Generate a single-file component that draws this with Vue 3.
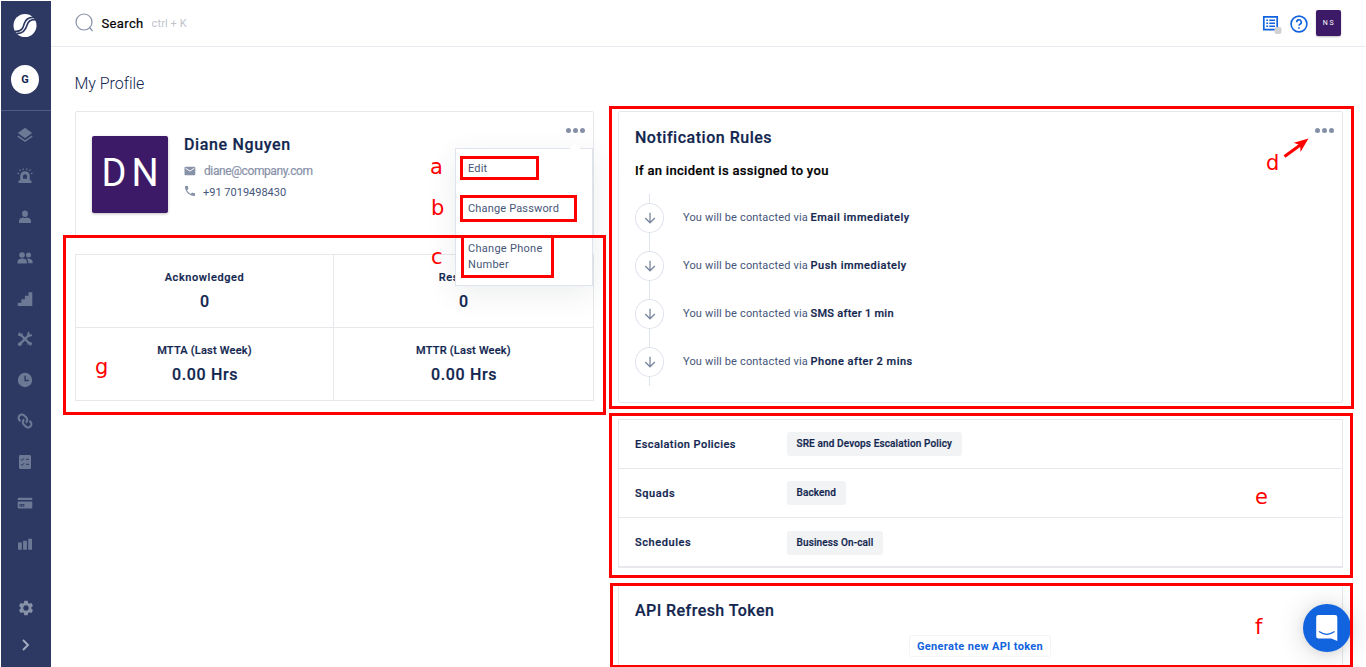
<script setup>
const nav = ['layers', 'siren', 'person', 'people', 'stairs', 'tools', 'clock', 'link', 'checklist', 'card', 'bars']

const stats = [
  { label: 'Acknowledged', value: '0', cls: 'wide' },
  { label: 'Resolved', value: '0', cls: 'wide' },
  { label: 'MTTA (Last Week)', value: '0.00 Hrs', cls: '' },
  { label: 'MTTR (Last Week)', value: '0.00 Hrs', cls: '' },
]

const rules = ['Email immediately', 'Push immediately', 'SMS after 1 min', 'Phone after 2 mins']

const groups = [
  { name: 'Escalation Policies', tag: 'SRE and Devops Escalation Policy' },
  { name: 'Squads', tag: 'Backend' },
  { name: 'Schedules', tag: 'Business On-call' },
]

const notes = ['a', 'b', 'c', 'd', 'e', 'f', 'g']
</script>

<template>
  <div class="app">
    <aside class="sidebar">
      <svg class="logo" viewBox="0 0 24 24">
        <circle cx="12" cy="11.5" r="11.5" fill="#fff" />
        <path d="M22.500 3.600C15.500 2.600 12.700 5 11.300 9.600C10 14.400 8.500 17.800 2 17.300" fill="none" stroke="#2d3963" stroke-width="1.700" />
        <path d="M23.500 5.800C18 4.800 15.400 6.600 14 11.200C12.600 15.800 10.300 19.900 3.500 19.400" fill="none" stroke="#2d3963" stroke-width="1.700" />
      </svg>
      <div class="org">G</div>
      <nav class="nav">
        <svg v-for="n in nav" :key="n" viewBox="0 0 16 16">
          <template v-if="n === 'layers'">
            <path d="M8 .8L15.200 6 8 11.200.8 6z" />
            <path d="M.8 9.200L8 14.200l7.200-5" fill="none" stroke="currentColor" stroke-width="1.500" />
          </template>
          <template v-else-if="n === 'siren'">
            <path fill-rule="evenodd" d="M3.200 12.500V8a4.800 4.800 0 0 1 9.600 0v4.500h1.700V15H1.500v-2.500zM8 6.300a2 2 0 0 0-2 2v2.400h4V8.300a2 2 0 0 0-2-2z" />
            <path d="M.5 4.900l1.600.8M2.400 1.500l1.300 1.400M5.900.4l.5 1.700M10.100.4l-.5 1.700M13.600 1.500l-1.300 1.400M15.500 4.900l-1.600.8" fill="none" stroke="currentColor" stroke-width="1.100" />
          </template>
          <template v-else-if="n === 'person'">
            <ellipse cx="8" cy="4.800" rx="2.900" ry="3.300" />
            <path d="M2 14v-1.600Q2 9 6 8.600q2 1 4 0q4 .4 4 3.800V14z" />
          </template>
          <template v-else-if="n === 'people'">
            <circle cx="5" cy="5" r="2.800" />
            <circle cx="11.500" cy="5" r="2.500" />
            <path d="M.5 13.500v-1.800Q1 8.600 5.200 8.600t4.700 3.100v1.800zM9.800 8.600q5.400-.1 5.800 3v1.700h-4.500q.3-2.800-1.300-4.700z" />
          </template>
          <path v-else-if="n === 'stairs'" d="M.8 15v-3.200h3.500V8.200h3.600V4.700h3.600V1.200h3.800V15z" />
          <template v-else-if="n === 'tools'">
            <path d="M3 3l10.300 10.300M13 3L2.800 13.200" fill="none" stroke="currentColor" stroke-width="2.400" />
            <path d="M.8 4.400L2 .9l1.700 2.200 2-1L5 5.700zM15.300 11.800l-1.400 3.500-1.500-2.200-2 .7.900-3.300zM10.800 1L10 4.500l1.500 1.400 3.600-1-.2-1.700-2 .6-1-1 .7-2z" />
            <circle cx="2.800" cy="13.200" r="1.900" />
          </template>
          <path v-else-if="n === 'clock'" fill-rule="evenodd" d="M8 .8a7.200 7.200 0 1 0 0 14.400A7.200 7.200 0 0 0 8 .8zM7.400 3.800h1.400v4h3v1.400H7.400z" />
          <g v-else-if="n === 'link'" fill="none" stroke="currentColor" stroke-width="2.100" transform="rotate(45 8 8)">
            <path d="M5 11.300H3.600a3.300 3.300 0 0 1 0-6.600h2.900a3.300 3.300 0 0 1 3.200 4" />
            <path d="M11 4.700h1.400a3.300 3.300 0 0 1 0 6.600H9.500a3.300 3.300 0 0 1-3.200-4" />
          </g>
          <template v-else-if="n === 'checklist'">
            <rect x="2" y="1" width="12" height="14" rx="1.200" />
            <path d="M4 5.300l1.100 1.100 2-2.200M9 5.300h3M4 10.300l1.100 1.100 2-2.200M9 10.300h3" fill="none" stroke="#2d3963" stroke-width="1" />
          </template>
          <template v-else-if="n === 'card'">
            <path fill-rule="evenodd" d="M1.700 2.800h12.600q1 0 1 1V5H.7V3.800q0-1 1-1zM.7 6.500h14.600v6q0 1-1 1H1.700q-1 0-1-1zM2.500 9v2.400h4.800V9z" />
            <path d="M3 10.200h1M4.800 10.200h1.600" stroke="currentColor" stroke-width="1" />
          </template>
          <path v-else d="M1 6.500h3.800v7.300H1zM6.100 4.800h3.800v9H6.100zM11.200 2.700H15v11.100h-3.800z" />
        </svg>
      </nav>
      <svg class="gear" viewBox="0 0 24 24">
        <path d="M19.140 12.940c.04-.3.060-.61.060-.94 0-.32-.02-.64-.07-.94l2.030-1.580c.18-.14.230-.41.120-.61l-1.920-3.320c-.12-.22-.37-.29-.59-.22l-2.390.96c-.5-.38-1.030-.7-1.620-.94l-.36-2.540c-.04-.24-.24-.41-.48-.41h-3.840c-.24 0-.43.17-.47.41l-.36 2.540c-.59.24-1.130.57-1.620.94l-2.390-.96c-.22-.08-.47 0-.59.22L2.740 8.870c-.12.21-.08.47.12.61l2.030 1.580c-.05.3-.09.63-.09.94s.02.64.07.94l-2.030 1.580c-.18.14-.23.41-.12.61l1.920 3.320c.12.22.37.29.59.22l2.390-.96c.5.38 1.030.7 1.620.94l.36 2.540c.05.24.24.41.48.41h3.840c.24 0 .44-.17.47-.41l.36-2.540c.59-.24 1.130-.56 1.620-.94l2.390.96c.22.08.47 0 .59-.22l1.920-3.320c.12-.22.070-.47-.12-.61zM12 15.600A3.600 3.600 0 1 1 12 8.400a3.600 3.600 0 0 1 0 7.200z" />
      </svg>
      <svg class="chevron" viewBox="0 0 10 12"><path d="M2 1l5 5-5 5" /></svg>
    </aside>

    <div class="main">
      <header class="topbar">
        <svg class="search" viewBox="0 0 20 20"><circle cx="9" cy="9" r="8" /><path d="M14.500 14.500L17.500 18" /></svg>
        <span class="search-label">Search</span>
        <span class="hint">ctrl + K</span>
        <span class="grow"></span>
        <svg class="news" viewBox="0 0 20 20">
          <path d="M1.800 1.800h13.400v12.800H1.800z" fill="none" stroke="#1263de" stroke-width="1.700" />
          <path d="M4.300 5.200h1.800M4.300 8.200h1.800M4.300 11.200h1.800M7.300 5.200h5.700M7.300 8.200h5.700M7.300 11.200h5.700" stroke="#1263de" stroke-width="1.600" />
          <rect x="12.500" y="12" width="7" height="7" rx="2" fill="#d2d2d2" />
        </svg>
        <svg class="help" viewBox="0 0 18 18">
          <circle cx="9" cy="9" r="7.900" /><path d="M6.700 7.200A2.300 2.300 0 1 1 10 9.200Q9 9.700 9 10.800M9 12.300v1.500" />
        </svg>
        <span class="user">NS</span>
      </header>

      <h1 class="title">My Profile</h1>

      <div class="columns">
        <section class="left">
          <div class="card profile">
            <div class="avatar">DN</div>
            <div class="who">
              <h2>Diane Nguyen</h2>
              <p class="mail">
                <svg viewBox="0 0 12 10"><rect x=".5" y=".8" width="10.800" height="8.400" rx="1" fill="#8791a8" /><path d="M1.500 2.200l4.400 2.900 4.400-2.900" fill="none" stroke="#fff" stroke-width="1" /></svg>
                <span>diane@company.com</span>
              </p>
              <p class="phone">
                <svg viewBox="3 3 18 18"><path fill="#8791a8" d="M20 15.500c-1.250 0-2.450-.2-3.570-.57-.35-.11-.74-.03-1.020.24l-2.200 2.200a15.050 15.050 0 0 1-6.590-6.590l2.200-2.210c.28-.26.36-.65.250-1A11.360 11.360 0 0 1 8.500 4c0-.55-.45-1-1-1H4c-.55 0-1 .45-1 1 0 9.390 7.610 17 17 17 .55 0 1-.45 1-1v-3.500c0-.55-.45-1-1-1z" /></svg>
                <span>+91 7019498430</span>
              </p>
            </div>
            <div class="dots"><i></i><i></i><i></i></div>
            <div class="menu">
              <span>Edit</span>
              <span>Change Password</span>
              <span class="two">Change Phone<br />Number</span>
            </div>
          </div>
          <div class="stats">
            <div v-for="s in stats" :key="s.label" class="stat">
              <span :class="s.cls">{{ s.label }}</span>
              <b>{{ s.value }}</b>
            </div>
          </div>
        </section>

        <section class="right">
          <div class="card rules">
            <div class="dots"><i></i><i></i><i></i></div>
            <h2>Notification Rules</h2>
            <h3>If an incident is assigned to you</h3>
            <ul>
              <li v-for="r in rules" :key="r">
                <span class="step"><svg viewBox="0 0 12 12"><path d="M6 .8v10M1.200 6L6 10.800 10.800 6" /></svg></span>
                <span class="via">You will be contacted via</span>
                <b :class="{ sms: r.startsWith('SMS') }">{{ r }}</b>
              </li>
            </ul>
          </div>
          <div class="groups">
            <div v-for="g in groups" :key="g.name" class="group">
              <span class="name" :class="g.name.toLowerCase()">{{ g.name }}</span>
              <span class="tag">{{ g.tag }}</span>
            </div>
          </div>
          <div class="card token">
            <h2>API Refresh Token</h2>
            <button>Generate new API token</button>
          </div>
        </section>
      </div>
    </div>

    <div class="chat">
      <svg viewBox="0 0 24 28">
        <path d="M3.500 1h16.500a2.300 2.300 0 0 1 2.300 2.300V27l-6-2.500H3.500A2.300 2.300 0 0 1 1.200 22.200V3.300A2.300 2.300 0 0 1 3.500 1z" fill="#fff" />
        <path d="M4.500 17.800q7.300 5 14.600 0" fill="none" stroke="#1263de" stroke-width="1.300" stroke-linecap="round" />
      </svg>
    </div>

    <div class="notes">
      <i v-for="n in notes" :key="n" class="box" :class="'box-' + n"></i>
      <em v-for="n in notes" :key="n" :class="'note-' + n">{{ n }}</em>
      <svg class="arrow" viewBox="0 0 28 24"><path d="M2.500 19.500L19 7.500" stroke="#f00" stroke-width="3" /><path d="M26.500 1.500L18.500 15l-.3-6.800-6.400-2.400z" fill="#f00" /></svg>
    </div>
  </div>
</template>

<style>
body { background: #fff; overflow: hidden; }
</style>

<style scoped>
.app { position: relative; display: flex; width: 1366px; height: 667px; overflow: hidden; font-family: Roboto, "Liberation Sans", sans-serif; color: #12264f; box-sizing: border-box; padding: 1px 0 0 1px; }
.app * { box-sizing: border-box; }
h1, h2, h3, p, ul { margin: 0; padding: 0; list-style: none; }
h2, h3, .stat b, .stat span, .name, .tag, li b { -webkit-text-stroke: .2px currentColor; }

.sidebar { flex: none; width: 50px; height: 667px; background: #2d3963; display: flex; flex-direction: column; align-items: center; color: #6c7894; }
.logo { width: 24px; height: 24px; margin: 13px 2px 0 0; flex: none; }
.org { width: 28px; height: 29px; margin: 27px 2px 0 0; border-radius: 50%; background: #fff; color: #12264f; font-size: 11px; font-weight: 700; line-height: 29px; text-align: center; flex: none; }
.nav { margin-top: 16px; width: 50px; border-top: 1px solid #4f5c82; padding-top: 16px; display: flex; flex-direction: column; align-items: center; gap: 24.900px; }
.nav svg { width: 16px; height: 16px; fill: currentColor; flex: none; margin-right: 2px; }
.gear { width: 18px; height: 18px; fill: #8791a8; margin-top: 47px; flex: none; }
.chevron { width: 10px; height: 12px; margin-top: 22px; fill: none; stroke: #a4adc0; stroke-width: 1.900; flex: none; }

.main { flex: 1; }
.topbar { height: 46px; border-bottom: 1px solid #e9ebf1; display: flex; align-items: center; padding: 0 25px 0 24px; }
.search { width: 20px; height: 20px; fill: none; stroke: #8590a6; stroke-width: 1.200; margin-top: -1px; }
.search-label { margin-left: 6.500px; font-size: 13px; letter-spacing: .36px; color: #000; -webkit-text-stroke: .2px #000; }
.hint { margin-left: 8px; font-size: 11px; letter-spacing: .1px; color: #c0c3ca; }
.grow { flex: 1; }
.news { width: 20px; height: 20px; margin-top: 2px; }
.help { width: 18px; height: 18px; margin: 0 8.500px 0 7.500px; fill: none; stroke: #1263de; stroke-width: 1.600; }
.user { width: 25px; height: 26px; margin-top: -1px; border-radius: 2px; background: #3c1a68; color: #fff; font-size: 7px; letter-spacing: 1.600px; line-height: 27px; text-align: center; padding-left: 1px; box-shadow: 0 1px 2px rgba(0, 0, 0, .25); }
.title { margin: 26px 0 0 23.500px; font-size: 16px; font-weight: 300; line-height: 21px; letter-spacing: -.04px; }

.columns { display: flex; gap: 24px; margin: 17px 0 0 24px; align-items: flex-start; }
.left { width: 519px; }
.right { width: 725px; }
.card { position: relative; border: 1px solid #e6e8eb; border-radius: 2px; }
.dots { position: absolute; top: 15.500px; right: 8.500px; display: flex; gap: 1.700px; }
.dots i { width: 5px; height: 5px; border-radius: 50%; background: #8590a6; }

.profile { height: 126px; padding: 24px 16px; display: flex; align-items: flex-start; }
.avatar { width: 76px; height: 77px; border-radius: 2px; background: #3c1a68; color: #fff; font-size: 38px; font-weight: 400; line-height: 74px; letter-spacing: 5px; padding-left: 9.500px; box-shadow: 0 1px 3px rgba(0, 0, 0, .25); }
.who { margin-left: 16px; }
.who h2 { font-size: 16px; font-weight: 500; line-height: 20px; letter-spacing: .64px; margin-top: -1px; }
.who p { display: flex; height: 21px; align-items: center; }
.mail { margin-top: 5px; font-size: 12px; color: #8791a8; letter-spacing: -.4px; }
.mail svg { width: 12px; height: 10px; margin-right: 8px; }
.mail span { -webkit-text-stroke: .2px #8791a8; }
.who .phone { margin-top: 1px; font-size: 11px; color: #44557a; }
.phone svg { width: 10px; height: 10px; margin: -4px 8px 0 1px; }
.menu { position: absolute; z-index: 2; top: 36px; left: 379px; width: 138px; height: 138px; background: #fff; border: 1px solid #dfe3ec; box-shadow: 0 8px 28px rgba(40, 50, 70, .09); padding: 12px; display: flex; flex-direction: column; gap: 24px; font-size: 11px; line-height: 16px; letter-spacing: .16px; color: #465677; }
.menu::before { content: ""; position: absolute; top: -4px; right: 13px; width: 8px; height: 8px; background: #fff; transform: rotate(45deg); }
.menu .two { letter-spacing: .28px; }

.stats { margin-top: 17px; display: grid; grid-template-columns: 258px 260px; grid-template-rows: 73px 73px; border: 1px solid #e6e8eb; border-width: 1px 0 0 1px; width: 519px; }
.stat { display: flex; flex-direction: column; align-items: center; padding-top: 14px; border: 1px solid #e6e8eb; border-width: 0 1px 1px 0; }
.stat span { font-size: 11px; font-weight: 500; line-height: 17px; letter-spacing: .22px; }
.stat .wide { letter-spacing: .58px; }
.stat b { font-size: 16px; font-weight: 500; line-height: 20px; letter-spacing: .66px; margin-top: 6px; padding-left: 1px; }

.rules { height: 292px; padding: 15px 16px; }
h2 { font-size: 16px; font-weight: 500; line-height: 22px; letter-spacing: .52px; }
h3 { margin-top: 12px; font-size: 13px; font-weight: 500; line-height: 20px; letter-spacing: .31px; color: #000; }
ul { position: relative; margin-top: 13px; height: 192px; }
ul::before { content: ""; position: absolute; left: 14px; top: 0; width: 1px; height: 192px; background: #dfe3ec; }
li { position: relative; height: 48px; display: flex; align-items: center; font-size: 11px; color: #44557a; letter-spacing: .16px; }
.step { width: 29px; height: 30px; border: 1px solid #dfe3ec; border-radius: 50%; background: #fff; display: flex; align-items: center; justify-content: center; margin: -1px 19px 0 0; }
.step svg { width: 12px; height: 12px; fill: none; stroke: #7c88a1; stroke-width: 1.300; }
.via { width: 127.500px; }
li b { font-weight: 500; color: #12264f; letter-spacing: .5px; }
li b.sms { letter-spacing: .28px; }
.via, li b { position: relative; top: -.5px; }

.groups { margin-top: 16px; border: 1px solid #e6e8eb; border-bottom-width: 2px; height: 149px; }
.group { height: 49px; border-bottom: 1px solid #e6e8eb; display: flex; align-items: center; padding: 0 16px; }
.group:last-child { border-bottom: 0; }
.name { width: 152px; font-size: 11px; font-weight: 500; letter-spacing: .43px; }
.name.squads, .name.schedules { letter-spacing: .58px; }
.tag { height: 24px; padding: 0 9.500px; border-radius: 3px; background: #f2f3f5; font-size: 10px; line-height: 24px; font-weight: 500; letter-spacing: .13px; }

.token { margin-top: 16px; height: 100px; padding: 15px 16px; display: flex; flex-direction: column; align-items: center; }
.token h2 { align-self: flex-start; letter-spacing: .44px; }
.token button { margin: 13px 1px 0 0; height: 22px; width: 142px; padding: 0; border: 1px solid #f4f4f6; border-radius: 3px; background: #fff; font: 700 11px Roboto, sans-serif; letter-spacing: .34px; color: #1263de; }

.chat { position: absolute; left: 1303px; top: 604px; width: 48px; height: 48px; border-radius: 50%; background: #1263de; box-shadow: 0 1px 8px rgba(0, 0, 0, .08), 0 2px 28px rgba(0, 0, 0, .16); display: flex; align-items: center; justify-content: center; }
.chat svg { width: 24px; height: 28px; }

.notes { position: absolute; inset: 0; z-index: 5; pointer-events: none; }
.box { position: absolute; border: 3px solid #f00; }
.box-a { left: 460px; top: 156px; width: 79px; height: 24px; }
.box-b { left: 460px; top: 195px; width: 117px; height: 27px; }
.box-c { left: 461px; top: 235px; width: 93px; height: 43px; }
.box-d { left: 609px; top: 106px; width: 745px; height: 303px; }
.box-e { left: 609px; top: 412.500px; width: 744px; height: 165px; }
.box-f { left: 610px; top: 583px; width: 743px; height: 85px; }
.box-g { left: 63px; top: 235px; width: 543px; height: 180px; }
.notes em { position: absolute; font: 21px/24px "DejaVu Sans", sans-serif; color: #f00; }
.notes .note-a { left: 430px; top: 155px; }
.notes .note-b { left: 431px; top: 196px; }
.notes .note-c { left: 431px; top: 245px; }
.notes .note-d { left: 1266px; top: 151px; }
.notes .note-e { left: 1255px; top: 485px; }
.notes .note-f { left: 1255px; top: 615px; }
.notes .note-g { left: 95px; top: 355px; }
.arrow { position: absolute; left: 1282px; top: 137px; width: 28px; height: 24px; }
</style>
